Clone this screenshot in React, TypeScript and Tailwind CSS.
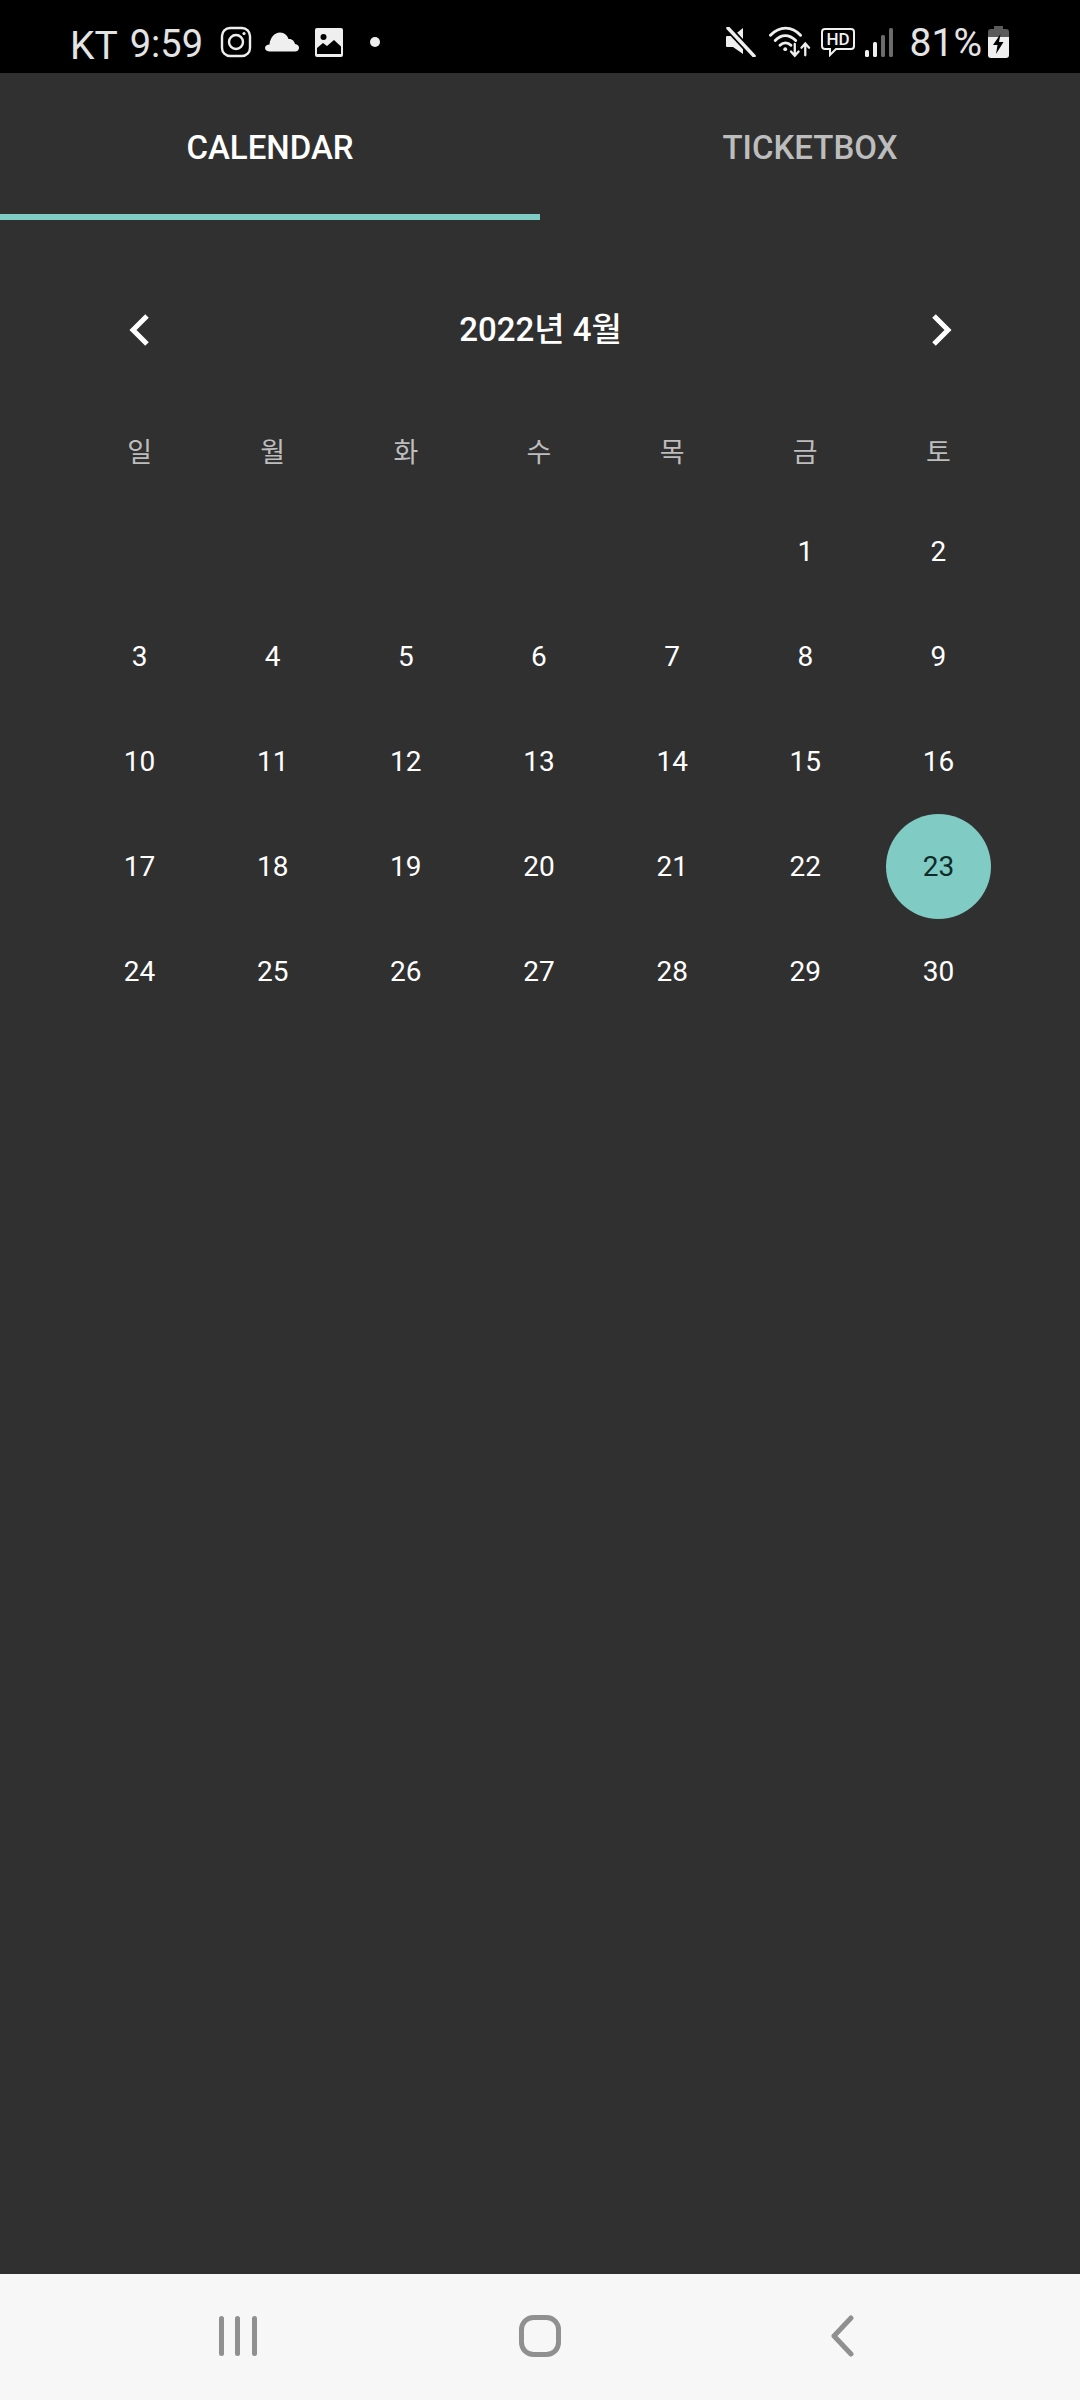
const font = { fontFamily: 'Roboto, "Noto Sans CJK KR", sans-serif' };
const week = ['일', '월', '화', '수', '목', '금', '토'];
const days: (number | null)[] = [null, null, null, null, null, 1, 2, ...Array.from({ length: 28 }, (_, i) => i + 3)];

function StatusLeft() {
  return (
    <div className="flex items-center">
      <span className="ml-[70px] mt-[9px] text-[39px] font-normal leading-none text-[#e4e4e4]">KT</span>
      <span className="ml-[12px] mt-[3px] text-[38px] font-normal leading-none text-[#e4e4e4]">9:59</span>
      <svg className="ml-[17px]" width="32" height="32" viewBox="0 0 32 32" fill="none" stroke="#efefef" strokeWidth="2.4">
        <rect x="2" y="2" width="28" height="28" rx="8" />
        <circle cx="16" cy="16" r="7" />
        <circle cx="24" cy="7.5" r="1.6" fill="#efefef" stroke="none" />
      </svg>
      <svg className="ml-[13px]" width="34" height="20" viewBox="0 0 34 20" fill="#efefef">
        <path d="M5 19.500C2 19.500 0 18 0 16c0-2 2-3.500 4.500-3.500C5 6 9.500 .5 15 .5c4.500 0 7.500 3 8.500 6.500 4-.3 6 2.500 6.500 5 2.500.2 4 1.700 4 3.700 0 2-1.500 3.800-4 3.800z" />
      </svg>
      <svg className="ml-[16px]" width="28" height="29" viewBox="0 0 28 29">
        <path fill="#efefef" d="M2 0h24a2 2 0 0 1 2 2v25a2 2 0 0 1-2 2H2a2 2 0 0 1-2-2V2a2 2 0 0 1 2-2z" />
        <circle cx="8.500" cy="9" r="3" fill="#000" />
        <path fill="#000" d="M2 26v-6l6-5 4 3 7-6 7 6.500V26z" />
      </svg>
      <div className="ml-[27px] h-[10px] w-[10px] rounded-full bg-[#efefef]" />
    </div>
  );
}

function StatusRight() {
  return (
    <div className="flex items-center">
      <svg width="30" height="30" viewBox="0 0 30 30" fill="#efefef">
        <path d="M1 9h6l10-8v26l-10-7H1a1 1 0 0 1-1-1V10a1 1 0 0 1 1-1z" />
        <path d="M2 1l26 28" stroke="#000" strokeWidth="7" />
        <path d="M2 1l26 28" stroke="#efefef" strokeWidth="3.500" strokeLinecap="round" />
      </svg>
      <svg className="ml-[13px]" width="42" height="32" viewBox="0 0 44 32" fill="none" stroke="#efefef" strokeWidth="3" strokeLinecap="round">
        <path d="M1.500 9C11 -1 24 -1 33 9" />
        <path d="M6.500 14.500C13 7.500 21 7.500 28 14.500" />
        <path d="M11.500 19.500C15 16 19.500 16 23 19.500" />
        <circle cx="17" cy="23.500" r="2" fill="#efefef" stroke="none" />
        <path d="M27 18v12M23 26l4 4.500 4-4.500" strokeWidth="2.400" />
        <path d="M38 30V18M34 22l4-4.500 4 4.500" strokeWidth="2.400" />
      </svg>
      <svg className="ml-[10px]" width="34" height="29" viewBox="0 0 34 29" fill="none" stroke="#efefef" strokeWidth="2">
        <path d="M4 1h26a3 3 0 0 1 3 3v14a3 3 0 0 1-3 3H15l-6 6v-6H4a3 3 0 0 1-3-3V4a3 3 0 0 1 3-3z" />
        <text x="17" y="17" textAnchor="middle" fontSize="17" fontWeight="500" fill="#efefef" stroke="none" fontFamily="Roboto">HD</text>
      </svg>
      <svg className="ml-[10px]" width="28" height="30" viewBox="0 0 28 30">
        <rect x="0" y="23" width="4" height="7" rx="1.500" fill="#efefef" />
        <rect x="8" y="15" width="4" height="15" rx="1.500" fill="#efefef" />
        <rect x="16" y="8" width="4" height="22" rx="1.500" fill="#6b6b6b" />
        <rect x="24" y="1" width="4" height="29" rx="1.500" fill="#6b6b6b" />
      </svg>
      <span className="ml-[17px] mt-[3px] text-[39px] font-normal leading-none text-[#e4e4e4]">81%</span>
      <svg className="ml-[6px]" width="21" height="32" viewBox="0 0 21 32">
        <path fill="#5a5a5a" d="M6 0h9v3h3a3 3 0 0 1 3 3v6H0V6a3 3 0 0 1 3-3h3z" />
        <path fill="#efefef" d="M0 11h21v18a3 3 0 0 1-3 3H3a3 3 0 0 1-3-3z" />
        <path fill="#000" d="M12.500 8L5 19h4.500l-1.500 9 7.500-12H11z" />
      </svg>
    </div>
  );
}

export default function App() {
  return (
    <div className="flex h-[2400px] w-[1080px] flex-col overflow-hidden bg-[#303030]" style={font}>
      <div className="flex h-[73px] items-center justify-between bg-black pr-[71px] pt-[11px]">
        <StatusLeft />
        <StatusRight />
      </div>

      <div className="flex h-[147px]">
        <div className="flex w-[540px] items-center justify-center border-b-[6px] border-[#80cbc4] pt-[8px] text-[33px] font-medium text-white">CALENDAR</div>
        <div className="flex w-[540px] items-center justify-center pt-[2px] text-[33px] font-medium text-[#bdbdbd]">TICKETBOX</div>
      </div>

      <div className="flex flex-1 flex-col pl-[73px] pr-[75px]">
        <div className="mt-[78px] flex h-[64px] items-center justify-between pl-[55px] pr-[52px]">
          <svg width="22" height="32" viewBox="0 0 22 32" fill="none" stroke="#fff" strokeWidth="5">
            <path d="M19 2L5 16l14 14" />
          </svg>
          <span className="text-[33px] font-medium text-white">2022년 4월</span>
          <svg width="22" height="32" viewBox="0 0 22 32" fill="none" stroke="#fff" strokeWidth="5">
            <path d="M3 2l14 14L3 30" />
          </svg>
        </div>

        <div className="mt-[59px] grid h-[64px] grid-cols-7 items-center text-center text-[27px] text-[#bdbdbd]">
          {week.map((d) => (
            <div key={d}>{d}</div>
          ))}
        </div>

        <div className="mt-[14px] grid grid-cols-7 auto-rows-[105px] text-[28px] text-white">
          {days.map((d, i) => (
            <div key={i} className="flex items-center justify-center">
              {d === 23 ? (
                <div className="flex h-[105px] w-[105px] items-center justify-center rounded-full bg-[#80cbc4] text-[#0f2b29]">{d}</div>
              ) : (
                d
              )}
            </div>
          ))}
        </div>
      </div>

      <div className="flex h-[126px] items-center bg-[#f7f7f7] pb-[2px] pl-[219px]">
        <svg width="38" height="40" viewBox="0 0 38 40" fill="#909090">
          <rect x="0" y="0" width="5" height="40" rx="2.500" />
          <rect x="16" y="0" width="5" height="40" rx="2.500" />
          <rect x="33" y="0" width="5" height="40" rx="2.500" />
        </svg>
        <svg className="ml-[262px]" width="42" height="42" viewBox="0 0 42 42" fill="none" stroke="#909090" strokeWidth="5">
          <rect x="2.500" y="2.500" width="37" height="37" rx="12" />
        </svg>
        <svg className="ml-[270px]" width="23" height="42" viewBox="0 0 23 42" fill="none" stroke="#909090" strokeWidth="5" strokeLinecap="round" strokeLinejoin="round">
          <path d="M20 3L3 21l17 18" />
        </svg>
      </div>
    </div>
  );
}
